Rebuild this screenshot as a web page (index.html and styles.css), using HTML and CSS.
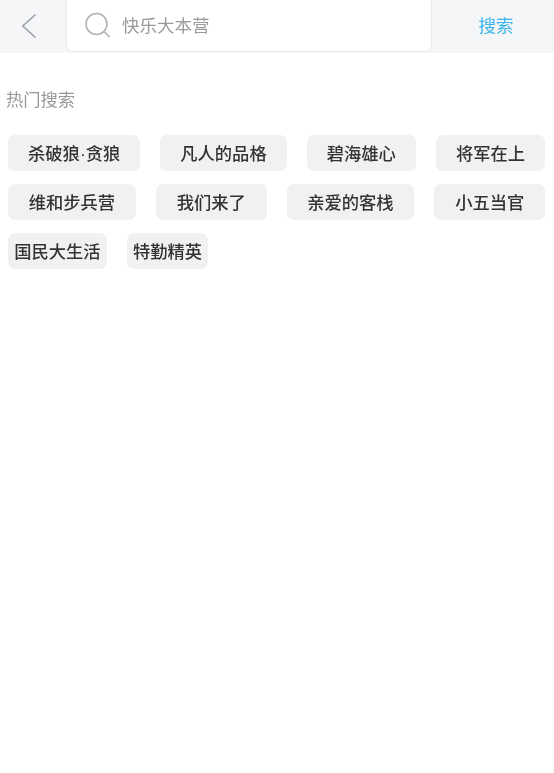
FILE: index.html
```html
<!DOCTYPE html>
<html lang="zh-CN">
<head>
  <meta charset="UTF-8" />
  <meta name="viewport" content="width=device-width, initial-scale=1" />
  <title>搜索</title>
  <link rel="stylesheet" href="styles.css">
</head>
<body>
  <header class="search-bar">
    <button class="back-btn" type="button" aria-label="返回">
      <svg width="16" height="26" viewBox="0 0 16 26">
        <path d="M14.500 1.500 L1.800 13 L14.500 24.500" fill="none" stroke="#9a9c9f" stroke-width="1.500" />
      </svg>
    </button>
    <div class="search-box">
      <svg class="search-icon" width="28" height="28" viewBox="0 0 28 28">
        <circle cx="12.500" cy="12" r="10.500" fill="none" stroke="#b4b4b4" stroke-width="1.600" />
        <path d="M20 19.500 L25.500 25" fill="none" stroke="#b4b4b4" stroke-width="1.600" />
      </svg>
      <span class="placeholder">快乐大本营</span>
    </div>
    <button class="search-btn" type="button">搜索</button>
  </header>

  <main class="hot">
    <h2 class="hot-title">热门搜索</h2>
    <div class="tags">
      <a class="tag">杀破狼<span class="dot">·</span>贪狼</a>
      <a class="tag">凡人的品格</a>
      <a class="tag">碧海雄心</a>
      <a class="tag">将军在上</a>
      <a class="tag">维和步兵营</a>
      <a class="tag">我们来了</a>
      <a class="tag">亲爱的客栈</a>
      <a class="tag">小五当官</a>
      <a class="tag">国民大生活</a>
      <a class="tag">特勤精英</a>
    </div>
  </main>
</body>
</html>
```
FILE: styles.css
```css
* {
  box-sizing: border-box;
  font-family: "Noto Sans CJK SC", "Liberation Sans", sans-serif;
}

html, body {
  margin: 0;
  padding: 0;
  background: #fff;
}

body {
  filter: blur(0.7px);
}

.search-bar {
  display: flex;
  align-items: flex-start;
  height: 53px;
  background: #f4f6f8;
}

button {
  border: none;
  background: none;
  padding: 0;
}

.back-btn {
  display: flex;
  align-items: center;
  justify-content: center;
  width: 66px;
  height: 51px;
  padding-right: 8px;
}

.search-box {
  display: flex;
  align-items: center;
  width: 366px;
  height: 52px;
  padding-left: 17px;
  padding-bottom: 2px;
  background: #fff;
  border: 1px solid #e9ebec;
  border-top: none;
  border-radius: 0 0 7px 7px;
}

.search-icon {
  margin-top: 3px;
}

.placeholder {
  margin-left: 10px;
  font-size: 17.500px;
  color: #9a9a9a;
}

.search-btn {
  flex: 1;
  height: 48px;
  padding-left: 6px;
  font-size: 17.500px;
  color: #3ab4ea;
}

.hot {
  padding: 32px 9px 0 8px;
}

.hot-title {
  margin: 0 0 23px -2px;
  font-size: 17.300px;
  font-weight: 400;
  line-height: 27px;
  color: #999;
}

.tags {
  display: flex;
  flex-wrap: wrap;
  gap: 13px 20px;
}

/* keeps the last row from stretching */
.tags::after {
  content: "";
  flex-grow: 999;
}

.tag {
  flex-grow: 1;
  height: 36px;
  padding: 0 6px;
  background: #f1f1f1;
  border-radius: 7px;
  font-size: 17.300px;
  font-weight: 500;
  line-height: 36px;
  text-align: center;
  color: #333;
}

.dot {
  font-family: "Liberation Sans", sans-serif;
}
```
